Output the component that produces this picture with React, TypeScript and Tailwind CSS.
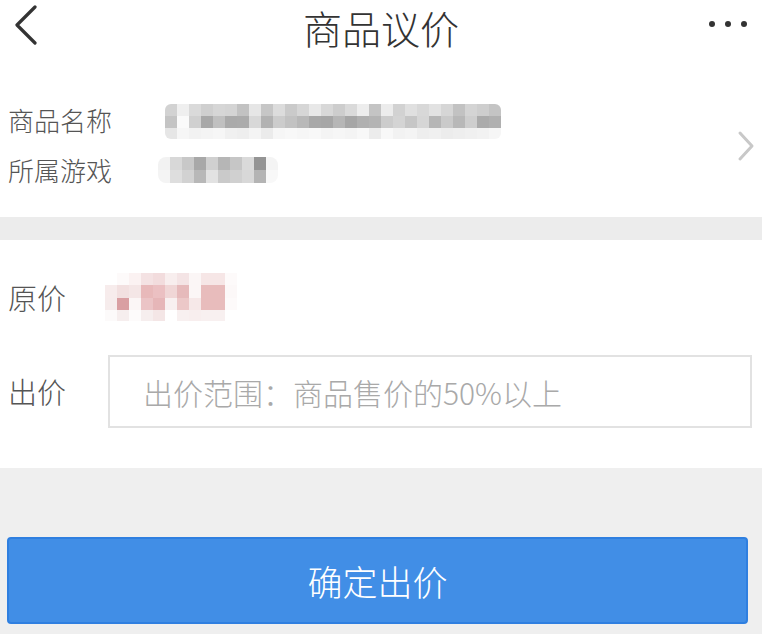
import React from "react";

// pixelated (mosaic) placeholders for blurred private content
const nameRows: string[][] = [
  ["bg-[#d2d2d2]", "bg-[#efefef]", "bg-[#dadada]", "bg-[#cfcfcf]", "bg-[#d6d6d6]", "bg-[#d4d4d4]", "bg-[#c2c2c2]", "bg-[#e6e6e6]", "bg-[#c6c6c6]", "bg-[#dcdcdc]", "bg-[#cacaca]", "bg-[#d6d6d6]", "bg-[#e8e8e8]", "bg-[#d8d8d8]", "bg-[#cdcdcd]", "bg-[#dadada]", "bg-[#ededed]", "bg-[#c4c4c4]", "bg-[#ececec]", "bg-[#d2d2d2]", "bg-[#e0e0e0]", "bg-[#d8d8d8]", "bg-[#e2e2e2]", "bg-[#d6d6d6]", "bg-[#c2c2c2]", "bg-[#d4d4d4]", "bg-[#cecece]", "bg-[#c4c4c4]"],
  ["bg-[#c4c4c4]", "bg-[#fafafa]", "bg-[#d0d0d0]", "bg-[#a8a8a8]", "bg-[#c0c0c0]", "bg-[#aaaaaa]", "bg-[#ababab]", "bg-[#d8d8d8]", "bg-[#b2b2b2]", "bg-[#cccccc]", "bg-[#c2c2c2]", "bg-[#b8b8b8]", "bg-[#a8a8a8]", "bg-[#a6a6a6]", "bg-[#b6b6b6]", "bg-[#a6a6a6]", "bg-[#b0b0b0]", "bg-[#b4b4b4]", "bg-[#cccccc]", "bg-[#d4d4d4]", "bg-[#c6c6c6]", "bg-[#d6d6d6]", "bg-[#b6b6b6]", "bg-[#cacaca]", "bg-[#b8b8b8]", "bg-[#cecece]", "bg-[#ababab]", "bg-[#b0b0b0]"],
  ["bg-[#e6e6e6]", "bg-[#f6f6f6]", "bg-[#f2f2f2]", "bg-[#f4f4f4]", "bg-[#f6f6f6]", "bg-[#f0f0f0]", "bg-[#eeeeee]", "bg-[#f4f4f4]", "bg-[#ebebeb]", "bg-[#f6f6f6]", "bg-[#f8f8f8]", "bg-[#f6f6f6]", "bg-[#f8f8f8]", "bg-[#f4f4f4]", "bg-[#f6f6f6]", "bg-[#f4f4f4]", "bg-[#f8f8f8]", "bg-[#ececec]", "bg-[#f8f8f8]", "bg-[#f2f2f2]", "bg-[#f4f4f4]", "bg-[#eeeeee]", "bg-[#f0f0f0]", "bg-[#ececec]", "bg-[#eeeeee]", "bg-[#f0f0f0]", "bg-[#f2f2f2]", "bg-[#f6f6f6]"],
];

const gameRows: string[][] = [
  ["bg-[#f2f2f2]", "bg-[#d8d8d8]", "bg-[#c8c8c8]", "bg-[#a8a8a8]", "bg-[#d0d0d0]", "bg-[#b6b6b6]", "bg-[#c6c6c6]", "bg-[#dadada]", "bg-[#949494]", "bg-[#f4f4f4]"],
  ["bg-[#f4f4f4]", "bg-[#dedede]", "bg-[#d2d2d2]", "bg-[#b8b8b8]", "bg-[#e2e2e2]", "bg-[#cacaca]", "bg-[#d0d0d0]", "bg-[#d8d8d8]", "bg-[#b4b4b4]", "bg-[#f8f8f8]"],
];

const priceRows: string[][] = [
  ["bg-[#ffffff]", "bg-[#fdfafa]", "bg-[#fbf2f2]", "bg-[#f4e2e3]", "bg-[#f2dcdd]", "bg-[#f8eeee]", "bg-[#f4e4e5]", "bg-[#fbf6f6]", "bg-[#f6e6e6]", "bg-[#f6e6e6]", "bg-[#fdfafa]"],
  ["bg-[#f7ecec]", "bg-[#f2e0e0]", "bg-[#f4e6e6]", "bg-[#e8b9ba]", "bg-[#ebc0c2]", "bg-[#f0d6d6]", "bg-[#e6babb]", "bg-[#fbf6f6]", "bg-[#e8bcbc]", "bg-[#e8bcbc]", "bg-[#fcf8f8]"],
  ["bg-[#f6ecec]", "bg-[#d99fa2]", "bg-[#fbf6f6]", "bg-[#ebc4c6]", "bg-[#e6b6b8]", "bg-[#f8f0f0]", "bg-[#ecc8c8]", "bg-[#f6e8e8]", "bg-[#e8bcbc]", "bg-[#e8bcbc]", "bg-[#fdfafa]"],
  ["bg-[#fcfafa]", "bg-[#f6eeee]", "bg-[#fdfbfb]", "bg-[#f6eeee]", "bg-[#f4e6e6]", "bg-[#ffffff]", "bg-[#f8f0f0]", "bg-[#f8eeee]", "bg-[#f8f0f0]", "bg-[#f8f0f0]", "bg-[#ffffff]"],
];

const Mosaic: React.FC<{ rows: string[][]; cell: string; rowH: string[]; className?: string }> = ({ rows, cell, rowH, className }) => (
  <div className={`flex flex-col overflow-hidden ${className ?? ""}`}>
    {rows.map((row, i) => (
      <div key={i} className={`flex ${rowH[i]}`}>
        {row.map((c, j) => (
          <div key={j} className={`${cell} h-full ${c}`} />
        ))}
      </div>
    ))}
  </div>
);

const App: React.FC = () => {
  return (
    <div
      className="w-[762px] h-[634px] bg-[#efefef] overflow-hidden flex flex-col font-light"
      style={{ fontFamily: '"Noto Sans CJK SC", "Noto Sans", sans-serif' }}
    >
      {/* header */}
      <div className="bg-white h-[58px] flex items-center shrink-0">
        <div className="w-[100px] pl-[12px] flex items-center">
          <svg width="26" height="40" viewBox="0 0 26 40" className="mt-[-8px]">
            <path d="M23 2 L5 20 L23 38" fill="none" stroke="#333" strokeWidth="3.2" strokeLinecap="round" strokeLinejoin="round" />
          </svg>
        </div>
        <div className="flex-1 text-center text-[39px] leading-[46px] text-[#333] mt-[-4px]">商品议价</div>
        <div className="w-[100px] flex justify-end pr-[15px] gap-[10px] mt-[-10px]">
          <span className="w-[6px] h-[6px] rounded-full bg-[#333]" />
          <span className="w-[6px] h-[6px] rounded-full bg-[#333]" />
          <span className="w-[6px] h-[6px] rounded-full bg-[#333]" />
        </div>
      </div>

      {/* product info */}
      <div className="bg-white h-[159px] flex items-center pl-[8px] pr-[6px] shrink-0">
        <div className="flex-1 flex flex-col gap-[14px] pt-[14px]">
          <div className="flex items-center h-[36px]">
            <span className="w-[150px] text-[26px] leading-none text-[#555]">商品名称</span>
            <Mosaic rows={nameRows} cell="w-[12px]" rowH={["h-[12px]", "h-[12px]", "h-[11px]"]} className="ml-[7px] rounded-[6px] mt-[4px]" />
          </div>
          <div className="flex items-center h-[36px]">
            <span className="w-[150px] text-[26px] leading-none text-[#555]">所属游戏</span>
            <Mosaic rows={gameRows} cell="w-[12px]" rowH={["h-[13px]", "h-[13px]"]} className="rounded-[8px]" />
          </div>
        </div>
        <svg width="20" height="32" viewBox="0 0 20 32" className="shrink-0 mt-[16px]">
          <path d="M4 3 L16 16 L4 29" fill="none" stroke="#c8c8c8" strokeWidth="3" strokeLinecap="round" strokeLinejoin="round" />
        </svg>
      </div>

      <div className="h-[23px] bg-[#ececec] shrink-0" />

      {/* price section */}
      <div className="bg-white h-[228px] flex flex-col pl-[8px] pr-[10px] shrink-0">
        <div className="flex items-center h-[50px] mt-[32px]">
          <span className="w-[97px] text-[29px] leading-none text-[#555]">原价</span>
          <Mosaic rows={priceRows} cell="w-[12px]" rowH={["h-[12px]", "h-[13px]", "h-[12px]", "h-[11px]"]} />
        </div>
        <div className="flex items-center mt-[33px]">
          <span className="w-[100px] text-[29px] leading-none text-[#555]">出价</span>
          <input
            className="flex-1 h-[73px] border-2 border-[#e2e2e2] bg-white px-[33px] text-[30px] font-light text-[#333] placeholder:text-[#a9a9a9] outline-none"
            placeholder="出价范围：商品售价的50%以上"
          />
        </div>
      </div>

      {/* submit */}
      <div className="pt-[69px] pl-[7px]">
        <button className="w-[741px] h-[87px] bg-[#418ee6] border-2 border-[#2f7fe0] rounded-[4px] text-white text-[35px] font-light leading-none">
          确定出价
        </button>
      </div>
    </div>
  );
};

export default App;
